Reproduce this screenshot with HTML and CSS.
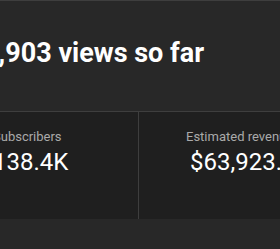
FILE: index.html
```html
<!DOCTYPE html>
<html lang="en">
<head>
  <meta charset="UTF-8">
  <meta name="viewport" content="width=device-width, initial-scale=1.0">
  <title>Channel summary</title>
  <link rel="stylesheet" href="styles.css">
</head>
<body>
  <div class="summary">
    <h1 class="headline">1,234,903 views so far</h1>

    <div class="metrics">
      <div class="metric">
        <div class="metric-label">Subscribers</div>
        <div class="metric-value">138.4K</div>
      </div>
      <div class="metric">
        <div class="metric-label">Estimated revenue</div>
        <div class="metric-value">$63,923.48</div>
      </div>
    </div>
  </div>
</body>
</html>
```

FILE: styles.css
```css
body {
  margin: 0;
  overflow: hidden;
  font-family: Roboto, 'Noto Sans', sans-serif;
  background-color: #282828;
  color: #fff;
}

.summary {
  border-top: 1px solid #3e3e3e;
  height: 248px;
}

.headline {
  margin: 36px 0 0 -70px;
  font-size: 27px;
  line-height: 32px;
  font-weight: 700;
  white-space: nowrap;
}

.metrics {
  display: grid;
  grid-template-columns: 192px 192px;
  margin: 42px 0 0 -54px;
  border-top: 1px solid #3e3e3e;
  background-color: #1f1f1f;
  height: 107px;
}

.metric {
  padding: 15px 0 0 47px;
  white-space: nowrap;
}

.metric + .metric {
  border-left: 1px solid #3e3e3e;
}

.metric-label {
  font-size: 13px;
  line-height: 20px;
  color: #aaa;
}

.metric-value {
  font-size: 24px;
  line-height: 30px;
}

.metric + .metric .metric-value {
  padding-left: 4px;
}
```
